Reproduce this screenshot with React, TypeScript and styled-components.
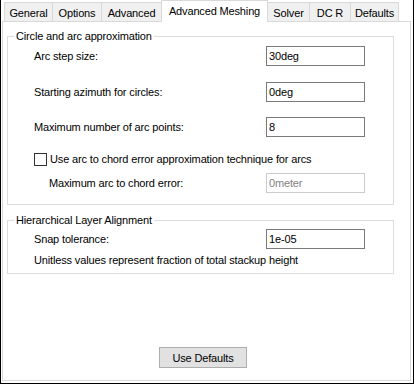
import styled, { createGlobalStyle } from 'styled-components';

const GlobalStyle = createGlobalStyle`
  html, body {
    margin: 0;
    padding: 0;
    background: #ffffff;
  }
  * {
    box-sizing: border-box;
  }
`;

const Window = styled.div`
  width: 414px;
  height: 384px;
  display: flex;
  flex-direction: column;
  padding: 0 2px 2px 1px;
  border-left: 1px solid #000;
  border-right: 1px solid #000;
  border-bottom: 1px solid #000;
  background: #ffffff;
  font-family: 'Liberation Sans', Arial, sans-serif;
  font-size: 11px;
  letter-spacing: -0.15px;
  color: #000;
`;

const TabStrip = styled.div`
  display: flex;
  align-items: flex-end;
  height: 21px;
  padding-left: 2px;
`;

const Tab = styled.div<{ $width: number; $active?: boolean }>`
  position: relative;
  width: ${(p) => p.$width}px;
  height: ${(p) => (p.$active ? 22 : 19)}px;
  margin-right: -1px;
  margin-bottom: ${(p) => (p.$active ? -1 : 0)}px;
  z-index: ${(p) => (p.$active ? 1 : 0)};
  display: flex;
  justify-content: center;
  align-items: center;
  padding-top: ${(p) => (p.$active ? 0 : 3)}px;
  border: 1px solid #d9d9d9;
  border-bottom: none;
  background: ${(p) => (p.$active ? '#ffffff' : '#f0f0f0')};
  white-space: nowrap;
  line-height: 13px;
`;

const Panel = styled.div`
  flex: 1;
  display: flex;
  flex-direction: column;
  border: 1px solid #d9d9d9;
  background: #ffffff;
  padding: 8px 16px 12px 4px;
`;

const Group = styled.fieldset<{ $top?: number }>`
  margin: ${(p) => p.$top ?? 0}px 0 0 0;
  padding: 0;
  border: 1px solid #dcdcdc;
  min-width: 0;
`;

const Legend = styled.legend`
  margin-left: 6px;
  padding: 0 2px;
  line-height: 13px;
`;

const GroupBody = styled.div<{ $pt: number; $pb: number }>`
  display: flex;
  flex-direction: column;
  padding: ${(p) => p.$pt}px 28px ${(p) => p.$pb}px 26px;
`;

const Row = styled.div<{ $mt?: number; $indent?: number }>`
  display: flex;
  align-items: center;
  justify-content: space-between;
  height: 20px;
  margin-top: ${(p) => p.$mt ?? 0}px;
  padding-left: ${(p) => p.$indent ?? 0}px;
`;

const Label = styled.span`
  line-height: 13px;
  white-space: nowrap;
`;

const TextBox = styled.input`
  width: 99px;
  height: 20px;
  margin: 0;
  padding: 0 2px;
  border: 1px solid #7a7a7a;
  background: #ffffff;
  font: inherit;
  letter-spacing: inherit;
  color: #000;
  outline: none;
  &:disabled {
    border-color: #cccccc;
    color: #838383;
    background: #ffffff;
  }
`;

const CheckRow = styled.label<{ $mt?: number }>`
  display: flex;
  align-items: center;
  gap: 3px;
  height: 13px;
  margin-top: ${(p) => p.$mt ?? 0}px;
  line-height: 13px;
  white-space: nowrap;
`;

const Box = styled.span`
  width: 13px;
  height: 13px;
  border: 1px solid #333333;
  background: #ffffff;
  flex: none;
`;

const Note = styled.div`
  margin-top: 5px;
  line-height: 13px;
  white-space: nowrap;
`;

const Button = styled.button`
  margin: auto 0 0 152px;
  width: 88px;
  height: 21px;
  padding: 0;
  border: 1px solid #adadad;
  background: #e1e1e1;
  font: inherit;
  letter-spacing: inherit;
  color: #000;
`;

const tabs = [
  { label: 'General', width: 49 },
  { label: 'Options', width: 50 },
  { label: 'Advanced', width: 61 },
  { label: 'Advanced Meshing', width: 107, active: true },
  { label: 'Solver', width: 43 },
  { label: 'DC R', width: 42 },
  { label: 'Defaults', width: 49 },
];

export default function App() {
  return (
    <>
      <GlobalStyle />
      <Window>
        <TabStrip>
          {tabs.map((t) => (
            <Tab key={t.label} $width={t.width} $active={t.active}>
              {t.label}
            </Tab>
          ))}
        </TabStrip>
        <Panel>
          <Group>
            <Legend>Circle and arc approximation</Legend>
            <GroupBody $pt={3} $pb={11}>
              <Row>
                <Label>Arc step size:</Label>
                <TextBox defaultValue="30deg" />
              </Row>
              <Row $mt={16}>
                <Label>Starting azimuth for circles:</Label>
                <TextBox defaultValue="0deg" />
              </Row>
              <Row $mt={15}>
                <Label>Maximum number of arc points:</Label>
                <TextBox defaultValue="8" />
              </Row>
              <CheckRow $mt={16}>
                <Box />
                Use arc to chord error approximation technique for arcs
              </CheckRow>
              <Row $mt={7} $indent={15}>
                <Label>Maximum arc to chord error:</Label>
                <TextBox defaultValue="0meter" disabled />
              </Row>
            </GroupBody>
          </Group>
          <Group $top={9}>
            <Legend>Hierarchical Layer Alignment</Legend>
            <GroupBody $pt={2} $pb={6}>
              <Row>
                <Label>Snap tolerance:</Label>
                <TextBox defaultValue="1e-05" />
              </Row>
              <Note>Unitless values represent fraction of total stackup height</Note>
            </GroupBody>
          </Group>
          <Button>Use Defaults</Button>
        </Panel>
      </Window>
    </>
  );
}
